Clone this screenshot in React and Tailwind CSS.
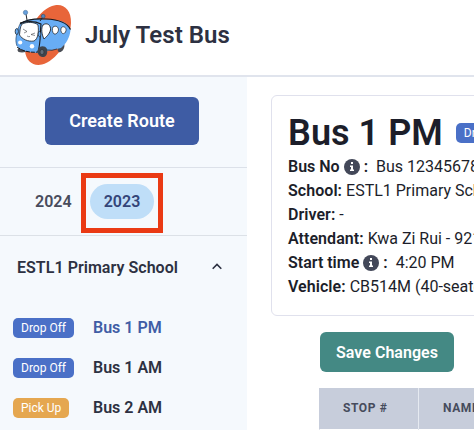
import React from "react";

function BusLogo() {
  return (
    <svg width="66" height="70" viewBox="0 0 66 70" fill="none" className="shrink-0">
      <path d="M45 5.2C54 3.5 61.5 10 61 23C60 41 46 61 32 64.5C23 66.5 16 61 15 51C15 33 29 8 45 5.2Z" fill="#e8653a" />
      <ellipse cx="12" cy="50" rx="4.5" ry="2.5" fill="#4a4d54" />
      <ellipse cx="51" cy="47.5" rx="3" ry="5" transform="rotate(25 51 47.5)" fill="#4a4d54" />
      <path d="M10 24C14 20 20 18.5 29 19L46 20C54 21 60 25 60.5 30C60 37 56 44 51 48L42 50L30 53C21 53 11 51 7 46C4 41 7 30 10 24Z" fill="#68adf5" />
      <path d="M10 24C15 20 25 18.5 36 19C48 19.5 57 22 60.5 29.5" stroke="#17191d" strokeWidth="1.2" />
      <path d="M10 24C7 30 4.5 40 7 46" stroke="#35506e" strokeWidth=".7" />
      <path d="M10 23C18 21 25 21 31 24C30 32 31 42 28 52" stroke="#17191d" strokeWidth="1.1" />
      <path d="M12 24C17 21.5 25 22 28 25C29 32 28 39 24 41C18 42 12 39 9.5 35C10 31 10 27 12 24Z" fill="white" stroke="#20242b" strokeWidth=".8" />
      <path d="M13 29l4 2.5-3 1.5M25 33l-4 1.5 4 1M17 36q1.5 1 3 .5" stroke="#20242b" strokeWidth=".5" />
      <path d="M33 25C37 22 41 25 40.5 30C39 35 36 37 34 39C31.5 34 31 28 33 25Z" fill="white" stroke="#20242b" strokeWidth=".9" />
      <path d="M43 27C46 25 48.5 27 48.5 30C48 33 46 34.5 44 34C42 32 42 29 43 27Z" fill="white" stroke="#20242b" strokeWidth=".7" />
      <path d="M51.5 27.5C54 25.5 56.5 28 56 30.5C55.5 33 54 34 52.5 33.5C50.5 32 50.5 29 51.5 27.5Z" fill="white" stroke="#20242b" strokeWidth=".7" />
      <path d="M17 20L16 14M30 21L32.5 17.5" stroke="#20242b" strokeWidth="1" />
      <circle cx="15.5" cy="12.5" r="2.2" fill="#659fdc" stroke="#43688e" strokeWidth=".5" />
      <circle cx="33.2" cy="16.2" r="1.9" fill="#5185bb" stroke="#304b69" strokeWidth=".6" />
      <ellipse cx="6.8" cy="31.5" rx="1.6" ry="3" fill="#65abf3" stroke="#20242b" strokeWidth=".8" />
      <ellipse cx="29.5" cy="34" rx="1.4" ry="2.6" fill="#65abf3" stroke="#20242b" strokeWidth=".7" />
      <circle cx="10.2" cy="42.5" r="2.1" fill="white" />
      <circle cx="22" cy="46.3" r="2.2" fill="white" />
      <path d="M7 47C12 51 20 53 28 52" stroke="#17191d" strokeWidth="1" strokeDasharray="4 1" />
      <path d="M28 49C29 46 35 45 37 49C38 54 36 57.5 32 57C28.5 56 27 53 28 49Z" fill="#3f444c" />
      <ellipse cx="32" cy="52" rx="2" ry="2.6" fill="#606b78" stroke="#25282d" strokeWidth=".5" />
      <path d="M37 50q5 1 10-1" stroke="#30363e" strokeWidth=".9" />
    </svg>
  );
}

function InfoIcon() {
  return (
    <svg width="16" height="16" viewBox="0 0 16 16" className="mx-1 mb-px shrink-0">
      <circle cx="8" cy="8" r="8" fill="#434859" />
      <path d="M7 3h2v2H7zM6 6.5h3v4h1V12H6v-1.5h1V8H6z" fill="white" />
    </svg>
  );
}

function Badge({ pickup = false, children }) {
  return (
    <span className={`flex h-5 shrink-0 items-center rounded-[5px] px-2 text-[12px] text-white ${pickup ? "bg-[#e5a750]" : "bg-[#4a70c7]"}`}>
      {children}
    </span>
  );
}

function Route({ name, pickup = false, active = false }) {
  return (
    <div className="flex h-10 items-center pl-[13px]">
      <div className="flex w-20 shrink-0">
        <Badge pickup={pickup}>{pickup ? "Pick Up" : "Drop Off"}</Badge>
      </div>
      <span className={`text-[16px] font-semibold ${active ? "text-[#405da5]" : "text-[#2d3142]"}`}>{name}</span>
    </div>
  );
}

function Detail({ label, info = false, children }) {
  return (
    <div className="flex h-6 items-center whitespace-pre">
      {info ? (
        <>
          <span className="font-semibold">{label}</span>
          <InfoIcon />
          <span className="mr-2 font-semibold">:</span>
        </>
      ) : (
        <span className="mr-1 font-semibold tracking-[0.05px]">{label}:</span>
      )}
      <span>{children}</span>
    </div>
  );
}

export default function App() {
  return (
    <div className="flex h-[430px] w-[474px] flex-col overflow-hidden bg-white font-['Roboto',sans-serif] text-[#1c1e2a]">
      <header className="flex h-[77px] shrink-0 items-start border-b-2 border-[#e0e4ed] pl-[10px]">
        <BusLogo />
        <h1 className="ml-[9px] mt-[19px] text-2xl font-semibold tracking-[0.06px] text-[#2d3142]">July Test Bus</h1>
      </header>
      <div className="flex min-h-0 flex-1">
        <aside className="w-[247px] shrink-0 bg-[#f5f9fd]">
          <div className="flex h-[91px] justify-center border-b border-[#dce1e9] pt-5 pr-[3px]">
            <button className="h-12 w-[154px] rounded-md bg-[#3e5ca4] text-lg font-semibold tracking-[0.05px] text-white">Create Route</button>
          </div>
          <div className="flex h-[68px] items-start border-b border-[#dce1e7] pl-[35px] pt-[5px] text-[16px] font-semibold">
            <span className="mt-[17px] w-[46px] text-[#484c5c]">2024</span>
            <div className="flex h-[60px] w-[82px] items-center justify-center border-5 border-[#ea3a14] pb-[3px]">
              <button className="h-[35px] w-16 rounded-full bg-[#bfdef8] text-[#344578]">2023</button>
            </div>
          </div>
          <div className="flex h-16 items-center justify-between pl-[17px] pr-[25px] text-[16px] font-semibold text-[#2d3142]">
            <span className="tracking-[0.04px]">ESTL1 Primary School</span>
            <svg width="10" height="7" viewBox="0 0 10 7" className="mb-1" fill="none"><path d="M.7 5.8L5 1.5l4.3 4.3" stroke="currentColor" strokeWidth="1.6" /></svg>
          </div>
          <div className="pt-2">
            <Route name="Bus 1 PM" active />
            <Route name="Bus 1 AM" />
            <Route name="Bus 2 AM" pickup />
          </div>
        </aside>
        <main className="min-w-0 flex-1 overflow-hidden pl-6 pt-[18px]">
          <section className="h-[221px] w-[420px] rounded-md border border-[#e0e1ed] pl-4 pt-[14px]">
            <div className="flex h-[45px] items-center">
              <h2 className="mr-[13px] whitespace-nowrap pt-px text-4xl font-semibold tracking-[0.04px]">Bus 1 PM</h2>
              <Badge>Drop Off</Badge>
            </div>
            <div className="text-[16px]">
              <Detail label="Bus No" info>Bus 12345678</Detail>
              <Detail label="School">ESTL1 Primary School</Detail>
              <Detail label="Driver">-</Detail>
              <Detail label="Attendant">Kwa Zi Rui - 921</Detail>
              <Detail label="Start time" info>4:20 PM</Detail>
              <Detail label="Vehicle">CB514M (40-seater)</Detail>
            </div>
          </section>
          <button className="ml-[49px] mt-4 block h-10 w-[134px] rounded-md bg-[#448984] pt-px text-[16px] font-semibold tracking-[0.04px] text-white">Save Changes</button>
          <div className="ml-12 mt-4 w-[400px] text-[12px] font-bold tracking-[0.6px] text-[#464b5c]">
            <div className="flex h-[41px] bg-[#c7cddb]">
              <div className="flex w-[100px] items-center border-r border-[#e6eaf1] pb-px pl-6">STOP #</div>
              <div className="flex items-center pb-px pl-6">NAME</div>
            </div>
            <div className="flex h-10 border-l border-[#e2e5ed]">
              <div className="w-[99px] border-r border-[#e2e5ed]" />
            </div>
          </div>
        </main>
      </div>
    </div>
  );
}
